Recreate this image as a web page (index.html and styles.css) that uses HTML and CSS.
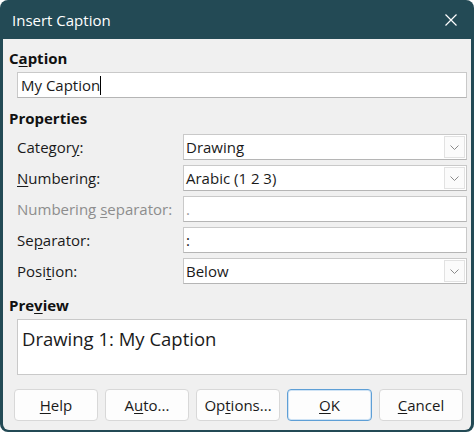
FILE: index.html
```html
<!DOCTYPE html>
<html>
<head>
<meta charset="utf-8">
<link rel="stylesheet" href="styles.css">
</head>
<body>
<div class="window">
  <div class="titlebar">
    <span class="title">Insert Caption</span>
    <svg class="close" width="12" height="12" viewBox="0 0 12 12"><path d="M0.5 0.5 L11.5 11.5 M11.5 0.5 L0.5 11.5" stroke="#ffffff" stroke-width="1.2" fill="none"/></svg>
  </div>
  <div class="content">
    <div class="heading">C<u>a</u>ption</div>
    <div class="field caption-field"><span class="text">My Caption</span><span class="caret"></span></div>

    <div class="heading props">Properties</div>
    <div class="form">
      <div class="label"><span>Categor<u>y</u>:</span></div>
      <div class="field select"><span class="text">Drawing</span><span class="drop"><svg width="9" height="5" viewBox="0 0 9 5"><path d="M0.5 0.5 L4.5 4.5 L8.5 0.5" stroke="#8a8a8a" stroke-width="1" fill="none"/></svg></span></div>

      <div class="label"><span><u>N</u>umbering:</span></div>
      <div class="field select"><span class="text">Arabic (1 2 3)</span><span class="drop"><svg width="9" height="5" viewBox="0 0 9 5"><path d="M0.5 0.5 L4.5 4.5 L8.5 0.5" stroke="#8a8a8a" stroke-width="1" fill="none"/></svg></span></div>

      <div class="label disabled"><span>Numbering <u>s</u>eparator:</span></div>
      <div class="field"><span class="text dim">.</span></div>

      <div class="label"><span>Se<u>p</u>arator:</span></div>
      <div class="field"><span class="text">:</span></div>

      <div class="label"><span>Posi<u>t</u>ion:</span></div>
      <div class="field select"><span class="text">Below</span><span class="drop"><svg width="9" height="5" viewBox="0 0 9 5"><path d="M0.5 0.5 L4.5 4.5 L8.5 0.5" stroke="#8a8a8a" stroke-width="1" fill="none"/></svg></span></div>
    </div>

    <div class="heading prev">Pre<u>v</u>iew</div>
    <div class="preview">Drawing 1: My Caption</div>

    <div class="buttons">
      <div class="btn"><span><u>H</u>elp</span></div>
      <div class="btn"><span>A<u>u</u>to...</span></div>
      <div class="btn"><span>Op<u>t</u>ions...</span></div>
      <div class="btn default"><span><u>O</u>K</span></div>
      <div class="btn"><span><u>C</u>ancel</span></div>
    </div>
  </div>
</div>
</body>
</html>
```

FILE: styles.css
```css
html, body {
  margin: 0;
  padding: 0;
  background: #ffffff;
}
body {
  font-family: "Open Sans", "Noto Sans", sans-serif;
  color: #1a1a1a;
}
.window {
  width: 474px;
  height: 432px;
  background: #234a55;
  border-radius: 8px;
  display: flex;
  flex-direction: column;
  overflow: hidden;
}
.titlebar {
  height: 39px;
  flex: none;
  display: flex;
  align-items: center;
  justify-content: space-between;
  padding: 0 17px 0 12px;
}
.title {
  color: #ffffff;
  font-size: 15px;
  margin-top: 1px;
}
.close {
  display: block;
}
.content {
  flex: 1;
  background: #f0f0f0;
  margin: 0 3px 2px 3px;
  border-radius: 0 0 6px 6px;
  padding: 9px 4px 0 0;
  display: flex;
  flex-direction: column;
}
.heading {
  font-weight: 700;
  font-size: 15px;
  line-height: 20px;
  height: 20px;
  padding-left: 6px;
  color: #111;
}
.props { margin-top: 10px; }
.prev { margin-top: 11px; }
.field {
  height: 26px;
  box-sizing: border-box;
  background: #ffffff;
  border: 1px solid #c9c9c9;
  border-bottom-color: #b5b5b5;
  display: flex;
  align-items: center;
  font-size: 15px;
  padding-left: 2px;
  color: #1a1a1a;
}
.caption-field {
  margin: 4px 0 0 14px;
  padding-left: 3px;
}
.caret {
  width: 1px;
  height: 19px;
  background: #000;
}
.form {
  margin: 6px 0 0 14px;
  display: grid;
  grid-template-columns: 166px 1fr;
  grid-auto-rows: 26px;
  row-gap: 5px;
}
.label {
  font-size: 15px;
  display: flex;
  align-items: center;
  color: #1a1a1a;
  white-space: nowrap;
}
.label.disabled { color: #8d8d8d; }
.text.dim { color: #9a9a9a; }
.select {
  justify-content: space-between;
  padding-right: 1px;
}
.drop {
  width: 21px;
  height: 22px;
  box-sizing: border-box;
  border: 1px solid #e2e2e2;
  background: #fbfbfb;
  display: flex;
  align-items: center;
  justify-content: center;
}
.drop svg { display: block; }
.preview {
  margin: 4px 0 0 14px;
  height: 56px;
  box-sizing: border-box;
  background: #fff;
  border: 1px solid #c9c9c9;
  font-size: 18.5px;
  padding: 6px 0 0 4px;
  line-height: 26px;
  color: #1a1a1a;
}
.buttons {
  margin: 14px 0 0 11px;
  display: flex;
  gap: 7px;
}
.btn {
  width: 84px;
  height: 32px;
  box-sizing: border-box;
  background: #fdfdfd;
  border: 1px solid #d8d8d8;
  border-radius: 4px;
  display: flex;
  align-items: center;
  justify-content: center;
  font-size: 15px;
  color: #1a1a1a;
}
.btn.default {
  width: 85px;
  border: 1px solid #5e9fd6;
  box-shadow: inset 0 0 0 1px #cfe3f5;
}
u {
  text-underline-offset: 2px;
}
```
